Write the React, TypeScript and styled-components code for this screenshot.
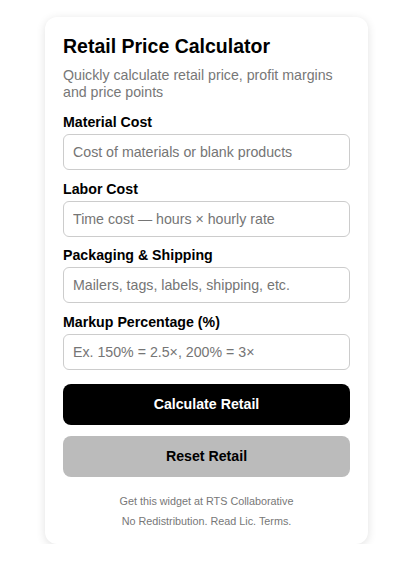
import React from "react";
import styled, { createGlobalStyle } from "styled-components";

const GlobalStyle = createGlobalStyle`
  body {
    margin: 0;
    background: #ffffff;
    font-family: "Liberation Sans", Arial, sans-serif;
  }
`;

const Card = styled.div`
  box-sizing: border-box;
  width: 323px;
  margin: 17px 0 0 45px;
  padding: 18px 18px 13px;
  background: #fff;
  border-radius: 12px;
  box-shadow: 0 2px 10px rgba(0, 0, 0, 0.12);
`;

const Title = styled.h2`
  margin: 0 0 9px;
  font-size: 19.5px;
  line-height: 23px;
  font-weight: bold;
  color: #000;
`;

const Subtitle = styled.p`
  margin: 0 0 14px;
  font-size: 14.2px;
  line-height: 16.5px;
  color: #777;
`;

const Field = styled.div`
  display: flex;
  flex-direction: column;
  gap: 4px;
  margin-bottom: 10.5px;
`;

const Label = styled.label`
  font-size: 14.2px;
  line-height: 16px;
  font-weight: bold;
  color: #000;
`;

const Input = styled.input`
  box-sizing: border-box;
  width: 100%;
  height: 36px;
  padding: 0 9px;
  border: 1px solid #ccc;
  border-radius: 6px;
  font-family: "Liberation Sans", Arial, sans-serif;
  font-size: 14.2px;
  color: #000;
  outline: none;

  &::placeholder {
    color: #757575;
  }
`;

const Actions = styled.div`
  display: flex;
  flex-direction: column;
  gap: 11px;
  margin-top: 14px;
`;

const Button = styled.button<{ $variant: "primary" | "secondary" }>`
  height: 41px;
  border: none;
  border-radius: 8px;
  font-family: "Liberation Sans", Arial, sans-serif;
  font-size: 14.2px;
  font-weight: bold;
  cursor: pointer;
  background: ${(p) => (p.$variant === "primary" ? "#000" : "#bbb")};
  color: ${(p) => (p.$variant === "primary" ? "#fff" : "#000")};
`;

const Footer = styled.div`
  margin-top: 14px;
  text-align: center;
  font-size: 10.8px;
  line-height: 20px;
  color: #777;
`;

const fields = [
  { label: "Material Cost", placeholder: "Cost of materials or blank products" },
  { label: "Labor Cost", placeholder: "Time cost \u2014 hours \u00d7 hourly rate" },
  { label: "Packaging & Shipping", placeholder: "Mailers, tags, labels, shipping, etc." },
  { label: "Markup Percentage (%)", placeholder: "Ex. 150% = 2.5\u00d7, 200% = 3\u00d7" },
];

const App: React.FC = () => {
  return (
    <>
      <GlobalStyle />
      <Card>
        <Title>Retail Price Calculator</Title>
        <Subtitle>Quickly calculate retail price, profit margins and price points</Subtitle>
        {fields.map((f) => (
          <Field key={f.label}>
            <Label>{f.label}</Label>
            <Input type="text" placeholder={f.placeholder} />
          </Field>
        ))}
        <Actions>
          <Button $variant="primary">Calculate Retail</Button>
          <Button $variant="secondary">Reset Retail</Button>
        </Actions>
        <Footer>
          <div>Get this widget at RTS Collaborative</div>
          <div>No Redistribution. Read Lic. Terms.</div>
        </Footer>
      </Card>
    </>
  );
};

export default App;
